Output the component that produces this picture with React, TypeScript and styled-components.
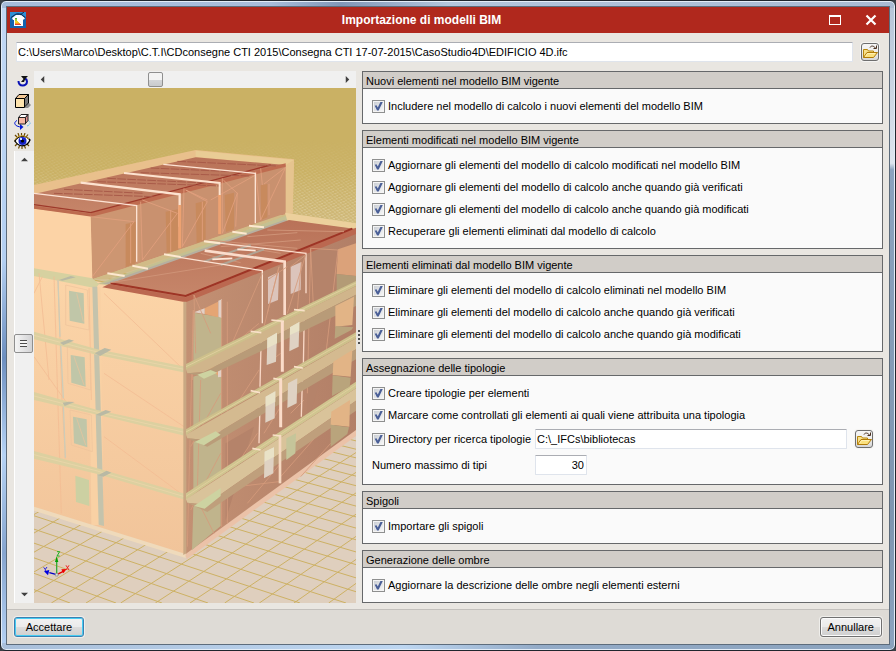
import React, { useState } from "react";
import styled, { createGlobalStyle } from "styled-components";

const GlobalStyle = createGlobalStyle`
  *, *::before, *::after { box-sizing: border-box; }
  body { margin: 0; background: #3b4046; }
  body, button, input { font-family: "Liberation Sans", Arial, sans-serif; font-size: 11px; color: #000; }
`;

const Frame = styled.div`
  display: flex;
  min-height: 100vh;
  padding: 6px;
  border: 1px solid #20262d;
  border-radius: 6px;
  background:
    linear-gradient(90deg, #a9bfda, #bdd6f1 45%, #93abc8 60%, #8aa2bd) bottom / 100% 7px no-repeat,
    linear-gradient(90deg, #a6bcda, #a9bddb 30%, #8197b7 38%, #b3c5dc 50%, #a9bbd3) top / 100% 7px no-repeat,
    linear-gradient(180deg, #c2d8f4, #b4d0f2 40%, #6d8fc0 55%, #b6d3f5 70%, #86a5cf 85%, #b6d3f5) left / 7px 100% no-repeat,
    linear-gradient(180deg, #b5c4d8, #dde5ee 25%, #8ba3bf 26%, #7f96b1 80%, #8ca4c0) right / 7px 100% no-repeat;
  box-shadow: inset 0 0 0 1px #e3ecf7;
`;

const Window = styled.div`
  flex: 1;
  min-width: 0;
  display: flex;
  flex-direction: column;
  background: #e9e6e1;
  outline: 1px solid #5d6c7c;
`;

const TitleBar = styled.header`
  display: flex;
  align-items: center;
  height: 26px;
  padding: 0 3px;
  background: #b0281d;
  color: #fff;
`;

const Title = styled.h1`
  flex: 1;
  margin: 0;
  text-align: center;
  font-size: 12px;
  line-height: 16px;
  font-weight: 700;
`;

const CaptionButton = styled.button`
  display: grid;
  place-items: center;
  width: 36px;
  height: 24px;
  padding: 0;
  border: 0;
  background: none;
`;

const CaptionButtons = styled.div`
  display: flex;
  margin-right: -3px;
`;

const PathRow = styled.div`
  display: flex;
  align-items: center;
  gap: 8px;
  padding: 9px 10px 9px 9px;
`;

const TextInput = styled.input<{ $width?: number; $right?: boolean }>`
  flex: ${p => (p.$width ? "none" : "1")};
  width: ${p => (p.$width ? `${p.$width}px` : "auto")};
  min-width: 0;
  height: 20px;
  padding: 0 2px 0 1px;
  border: 1px solid #dfe4ec;
  border-top-color: #abadb3;
  border-radius: 1px;
  background: #fff;
  text-align: ${p => (p.$right ? "right" : "left")};
`;

const FolderButton = styled.button`
  display: grid;
  place-items: center;
  flex: none;
  width: 18px;
  height: 18px;
  padding: 0;
  border: 1px solid #6e6e6e;
  border-radius: 3px;
  background: linear-gradient(#f6f6f6, #ededed 50%, #d6d6d6);
  box-shadow: 0 0 0 1px #f5f4f2;
`;

const Main = styled.main`
  flex: 1;
  display: grid;
  grid-template-columns: minmax(0, 342fr) 6px minmax(0, 521fr);
  padding: 0 6px 6px 7px;
`;

const Viewer = styled.section`
  display: grid;
  grid-template-columns: 20px minmax(0, 1fr);
`;

const Tools = styled.div`
  display: flex;
  flex-direction: column;
`;

const ToolButton = styled.button`
  display: grid;
  place-items: center;
  width: 17px;
  height: 20px;
  padding: 0;
  border: 0;
  background: none;
`;

const ViewColumn = styled.div`
  display: flex;
  flex-direction: column;
  min-width: 0;
`;

const ScrollBar = styled.div<{ $vertical?: boolean }>`
  display: flex;
  flex-direction: ${p => (p.$vertical ? "column" : "row")};
  align-items: stretch;
  flex: ${p => (p.$vertical ? "1" : "0 0 17px")};
  min-height: 0;
  background: #f0f0f0;
  box-shadow: ${p => (p.$vertical ? "inset 1px 0 #fff" : "none")};
`;

const ArrowButton = styled.button`
  display: grid;
  place-items: center;
  flex: none;
  min-width: 17px;
  height: 17px;
  padding: 0;
  border: 0;
  background: none;
`;

const Slider = styled.input<{ $vertical?: boolean }>`
  appearance: none;
  flex: 1;
  min-width: 0;
  min-height: 0;
  margin: 0;
  width: ${p => (p.$vertical ? "19px" : "auto")};
  height: ${p => (p.$vertical ? "auto" : "17px")};
  writing-mode: ${p => (p.$vertical ? "vertical-lr" : "horizontal-tb")};
  background: transparent;
  &::-webkit-slider-thumb {
    appearance: none;
    width: ${p => (p.$vertical ? 19 : 15)}px;
    height: ${p => (p.$vertical ? 19 : 15)}px;
    border: 1px solid #8f8f8f;
    border-radius: 2px;
    background: ${p =>
      p.$vertical
        ? "repeating-linear-gradient(#4c4c4c 0 1px, #f5f5f5 1px 3px) center / 7px 7px no-repeat, linear-gradient(90deg, #f5f5f5, #d2d2d4)"
        : "linear-gradient(#f3f3f3 50%, #d5d6d8 50%, #c9cbcd)"};
  }
`;

const Scene = styled.svg`
  display: block;
  flex: 1 1 0;
  width: 100%;
  min-height: 0;
  background: #dfcfbe;
`;

const Splitter = styled.div`
  display: flex;
  flex-direction: column;
  align-items: center;
  justify-content: center;
  gap: 2px;
`;

const Dot = styled.span`
  width: 2px;
  height: 2px;
  background: #4e4e4e;
`;

const Options = styled.form`
  display: flex;
  flex-direction: column;
  gap: 6px;
`;

const Group = styled.fieldset`
  margin: 0;
  padding: 0;
  min-width: 0;
  border: 1px solid #66686a;
  background: #fafafa;
`;

const GroupTitle = styled.h2`
  margin: 0;
  height: 17px;
  padding: 0 3px;
  border-bottom: 1px solid #66686a;
  background: #d1cdc8;
  font-size: 11px;
  line-height: 18px;
  font-weight: 400;
`;

const GroupBody = styled.div`
  display: flex;
  flex-direction: column;
  padding: 6px 9px;
`;

const Row = styled.div<{ $tall?: boolean }>`
  display: flex;
  align-items: center;
  height: ${p => (p.$tall ? 26 : 22)}px;
`;

const Label = styled.label<{ $column?: boolean }>`
  display: flex;
  align-items: center;
  gap: 3px;
  flex: none;
  width: ${p => (p.$column ? "163px" : "auto")};
  line-height: 17px;
  white-space: nowrap;
`;

const FieldArea = styled.div`
  flex: 1;
  display: flex;
  align-items: center;
  gap: 8px;
`;

const Check = styled.input`
  appearance: none;
  display: grid;
  place-items: center;
  flex: none;
  width: 13px;
  height: 13px;
  margin: 0;
  border: 1px solid #8e8f8f;
  background: linear-gradient(135deg, #cbcfd5, #f6f6f6) center / 9px 9px no-repeat, #f4f4f4;
  &:checked::after {
    content: "";
    width: 9px;
    height: 9px;
    background: #4a5f97;
    clip-path: polygon(8% 48%, 28% 42%, 42% 66%, 74% 0, 100% 0, 52% 100%, 34% 100%);
  }
`;

const Footer = styled.footer`
  display: flex;
  align-items: center;
  justify-content: space-between;
  height: 35px;
  padding: 0 7px;
  border-top: 1px solid #c3c0bc;
  background: #dedbd6;
`;

const PushButton = styled.button<{ $primary?: boolean }>`
  min-width: ${p => (p.$primary ? 70 : 62)}px;
  height: 20px;
  padding: 0 7px;
  border: 1px solid ${p => (p.$primary ? "#3c7fb1" : "#707070")};
  border-radius: 3px;
  background: linear-gradient(#f2f2f2, #ebebeb 50%, #dddddd 50%, #cfcfcf);
  box-shadow: ${p => (p.$primary ? "inset 0 0 0 1px #46cdf3, 0 0 0 1px #efeeeb" : "inset 0 0 0 1px #fbfbfb, 0 0 0 1px #efeeeb")};
  line-height: 16px;
`;

const FolderIcon = () => (
  <svg width="16" height="16" viewBox="0 0 16 16" aria-hidden="true">
    <path d="M1.5 13.5V5.500h4l1 1.500h5v2" fill="#f8e08a" stroke="#b8860b" />
    <path d="M1.5 13.5 5 8.500h10.500l-4 5z" fill="#fbe17e" stroke="#b07a08" />
    <path d="M3.500 12.500 5.500 9.500H13" stroke="#fff0b4" fill="none" />
    <path d="M8 3.500c1-2 3.500-2 5.500.5M14.500 1.500v3h-3" fill="none" stroke="#4a3020" />
  </svg>
);

const AppIcon = () => (
  <svg width="16" height="16" viewBox="0 0 16 16" aria-hidden="true">
    <rect width="16" height="16" fill="#1462ae" />
    <path d="M0 0h16v5L8 1 0 6z" fill="#2f8fd5" />
    <path d="M2 6 6 3h5l4 3-1 1.500h-1V14H4V8H3z" fill="#fff" />
    <path d="M1 5.500 6 2h5l4 3.500M10 3l4-3" stroke="#0b2f52" fill="none" />
    <path d="M5 6h2v1H5z" fill="#49a942" />
    <path d="M5 7h2v2H5z" fill="#a4ce39" />
    <path d="M5 9h3v1H5z" fill="#f5d426" />
    <path d="M5 10h4v1H5z" fill="#f5c426" />
    <path d="M5 11h5v1H5z" fill="#f59a23" />
    <path d="M5 12h6v1H5z" fill="#e5402f" />
  </svg>
);

const RotateIcon = () => (
  <svg width="14" height="14" viewBox="0 0 14 14" aria-hidden="true">
    <path d="M2.500 7C2.500 13 11 13 11 7.500 11 6 10 5 9 4.500" fill="none" stroke="#0a12b4" strokeWidth="2" />
    <path d="M5 2h7L9.500 4.500 8 8 5 8 7.500 5z" fill="#111" />
  </svg>
);

const CubeIcon = () => (
  <svg width="17" height="16" viewBox="0 0 17 16" aria-hidden="true">
    <path d="M10 15h4l3-3-2-2z" fill="#8d8d8d" />
    <path d="M1.500 5.500 5 1.500h9.500L10.500 5.500z" fill="#f3c896" stroke="#000" />
    <path d="M10.500 5.500l4-4v8.500l-4 4z" fill="#777" stroke="#000" />
    <path d="M1.500 5.500h9v9h-9z" fill="#fde3ad" stroke="#000" />
  </svg>
);

const OrbitIcon = () => (
  <svg width="17" height="17" viewBox="0 0 17 17" aria-hidden="true">
    <path d="M14 7.500c3 1.500 3 4-1 5.500" fill="none" stroke="#67b7e8" strokeDasharray="2 1" />
    <path d="M3 7.500C0 9 0 11.500 3 13c1.500.8 3 1 5 1" fill="none" stroke="#0018d8" />
    <path d="M6 11l3.500 3L6 17z" fill="#0018d8" />
    <path d="M4.500 4.500l2.500-3h7l-2.500 3z" fill="#fff" stroke="#222" />
    <path d="M11.500 4.500l2.500-3v6l-2.500 3z" fill="#d88e8e" stroke="#222" />
    <path d="M4.500 4.500h7v6.500h-7z" fill="#f6b8a4" stroke="#222" />
  </svg>
);

const EyeIcon = () => (
  <svg width="17" height="16" viewBox="0 0 17 16" aria-hidden="true">
    <path d="M3 4 1 2M5 3 4 0M7.500 2.500V0M10 3l1-3M12 4l2-2.500M3 11l-2 2M5.500 13l-1 2.500M8 13.500V16M10.500 13l1 2.500M13 11l2 2M2 8H0" stroke="#6b4a00" strokeWidth="1.200" />
    <path d="M1 8c3-6 11-6 15-1-3 7-11 8-15 1z" fill="#fff" stroke="#000" strokeWidth="1.300" />
    <circle cx="8.500" cy="8" r="4" fill="#1522c9" />
    <circle cx="8.500" cy="8" r="1.600" fill="#000" />
    <rect x="6" y="5" width="2" height="2" fill="#cfe0ff" />
    <path d="M1 6.500C4 2 11 1.500 15 6" stroke="#d7a520" fill="none" />
  </svg>
);

const arrows = {
  left: "M6 0v8L2 4z",
  right: "M2 0v8l4-4z",
  up: "M0 6h8L4 2z",
  down: "M0 2h8L4 6z",
};

const Arrow = ({ dir, label }: { dir: keyof typeof arrows; label: string }) => (
  <ArrowButton type="button" aria-label={label}>
    <svg width="7" height="7" viewBox="0 0 8 8" aria-hidden="true">
      <path d={arrows[dir]} fill="#404040" />
    </svg>
  </ArrowButton>
);

const range = (from: number, to: number, step: number) => {
  const out: number[] = [];
  for (let v = from; v <= to; v += step) out.push(v);
  return out;
};

/* Ground lines converge on two vanishing points; drawing units are thirds of a pixel. */
const gridA = range(-1300, 3200, 104).map(x => `M${x} 1569L6000 -2100`).join("");
const gridB = range(-9000, 6000, 138).map(x => `M${x} 1569L-5085 -360`).join("");

const Building = () => (
  <Scene viewBox="0 24 966 1545" preserveAspectRatio="xMidYMid slice" role="img" aria-label="Modello BIM">
    <defs>
      <linearGradient id="haze" x1="0" y1="0" x2="0" y2="1">
        <stop offset="0" stopColor="#cab164" />
        <stop offset=".28" stopColor="#cab164" />
        <stop offset=".5" stopColor="#cab164" stopOpacity=".7" />
        <stop offset=".85" stopColor="#cab164" stopOpacity="0" />
      </linearGradient>
      <linearGradient id="wall" x1="0" y1="0" x2="0" y2="1">
        <stop offset="0" stopColor="#fcd5a8" />
        <stop offset="1" stopColor="#f1c49a" />
      </linearGradient>
      <linearGradient id="side" x1="0" y1="0" x2="1" y2="0">
        <stop offset="0" stopColor="#c39073" />
        <stop offset="1" stopColor="#b27f67" />
      </linearGradient>
      <linearGradient id="top" x1="0" y1="0" x2="0" y2="1">
        <stop offset="0" stopColor="#b97258" />
        <stop offset="1" stopColor="#c6866a" />
      </linearGradient>
      <pattern id="dots" width="14" height="10" patternUnits="userSpaceOnUse" patternTransform="rotate(8)">
        <path d="M1 2h7M8 7h6" stroke="#e3d5a8" strokeWidth="2.500" />
      </pattern>
      <linearGradient id="fade" x1="0" y1="0" x2="0" y2="1">
        <stop offset="0" stopColor="#000" />
        <stop offset="1" stopColor="#fff" />
      </linearGradient>
      <mask id="dotMask">
        <rect y="180" width="966" height="220" fill="url(#fade)" />
        <rect y="400" width="966" height="60" fill="#fff" />
      </mask>
    </defs>

    <rect y="24" width="966" height="1545" fill="#dfcfbe" />
    <path d={gridA} stroke="#cdb164" strokeWidth="3" />
    <path d={gridB} stroke="#cdb164" strokeWidth="3" />
    <rect y="24" width="966" height="900" fill="url(#haze)" />
    <rect y="180" width="966" height="280" fill="url(#dots)" mask="url(#dotMask)" />

    {/* Upper block */}
    <path d="M0 315 485 210 780 238 776 400 740 405 0 580z" fill="#e9c08c" />
    <path d="M485 212 780 240 755 256 485 230z" fill="#e9cc95" />
    <path d="M755 256 780 240 776 400 753 403z" fill="#e6c48f" />
    <path d="M0 342 485 232 755 255 170 408 0 385z" fill="url(#top)" />
    <path d="M170 405 755 256V402L175 597z" fill="#c9916f" />
    <path d="M170 405 320 368V548L175 597z" fill="#cd9672" />
    <path d="M0 386 170 408 175 597 0 570z" fill="#fcd3a6" />
    <path d="M170 397 755 250 755 260 170 411z" fill="#bf6c50" />
    <path d="M0 374 170 398 710 255" fill="none" stroke="#9e392a" strokeWidth="4" />
    <path d="M0 382 170 405" stroke="#bd6b4f" strokeWidth="9" />
    <path d="M60 340 360 350M90 328 330 340M190 305 560 318M220 295 540 310M320 278 650 288M350 264 620 276M430 244 730 258" stroke="#a95b49" strokeWidth="3" strokeDasharray="26 4" />
    <path d="M275 432 305 425V550L275 562zM395 395 432 388V510L398 518zM485 370 515 362V478L488 490zM572 345 600 338V448L576 456zM680 316 700 312V412L682 420z" fill="#c88a5d" />
    <path d="M175 590 300 425 170 410M320 365 325 540 430 400 325 360M450 325 445 500 520 365 455 330 520 360M565 295 565 460 610 340 568 300M665 275 680 420 755 262 690 312M610 338 605 440M530 360 665 285M680 265 685 315M705 312V405M290 430 290 550M410 390V515M505 365V480" stroke="#e2a07e" strokeWidth="2.500" fill="none" />
    <path d="M0 340 308 377V545" fill="none" stroke="#fde3d4" strokeWidth="4" />
    <path d="M140 308 437 343V440" fill="none" stroke="#fde3d0" strokeWidth="7" />
    <path d="M437 375V505" stroke="#eda271" strokeWidth="9" />
    <path d="M270 279 557 309V345" fill="none" stroke="#fde3d0" strokeWidth="6" />
    <path d="M557 345V462" stroke="#eda271" strokeWidth="9" />
    <path d="M388 253 664 280V430" fill="none" stroke="#fde3d4" strokeWidth="4" />

    {/* Long facade in shade */}
    <path d="M455 655 966 447V1058L455 1430z" fill="url(#side)" />
    <path d="M830 500 912 510 908 640 830 670zM575 1090 660 1040 575 1320zM820 830 890 780 820 1040z" fill="#b5836a" />

    {/* Lit gable */}
    <path d="M0 570 190 605 455 660V1430L0 1282z" fill="url(#wall)" />
    <path d="M0 565 175 595 195 612 185 625 0 588z" fill="#d6d1a0" />
    <path d="M182 622 190 1335" stroke="#f9d1a4" strokeWidth="36" />
    <path d="M175 620H190L210 1338 194 1334z" fill="#c4c3ac" />
    <path d="M190 612 760 405 775 424 225 615z" fill="#c4c092" />
    <path d="M175 598 740 405 760 405 220 598z" fill="#d1bb87" />
    <path d="M205 612 225 612 770 425 750 420z" fill="#b6afa0" />
    <path d="M72 598 84 960 94 1135M15 580 45 900M60 590 82 1300M165 625 172 960M210 640 450 870M210 880 450 1040M210 1070 440 1240M0 830 110 985M0 640 25 590" fill="none" stroke="#f3bd94" strokeWidth="2.500" />
    <path d="M72 600 78 770M80 795 88 955M88 975 94 1133" stroke="#cdccb8" strokeWidth="4" />

    <path d="M0 755 190 808 455 860V878L190 825 0 778z" fill="#dcd0a0" />
    <path d="M0 936 190 990 455 1048V1068L190 1004 0 960z" fill="#dcd0a0" />
    <path d="M0 1113 190 1165 455 1242V1260L190 1182 0 1136z" fill="#dcd0a0" />
    <path d="M0 766 190 816 455 869M0 948 190 997 455 1058M0 1124 190 1173 455 1251" stroke="#e8d5a8" strokeWidth="3" fill="none" />
    <path d="M182 820 212 804 232 809 198 828zM186 1004 215 990 232 995 200 1008zM192 1186 218 1172 232 1178 208 1190zM78 788 105 778 120 782 88 795zM86 968 105 965 122 966 92 978zM75 600 110 588 125 592 85 602z" fill="#b9b9a4" />
    <path d="M0 1280 455 1422V1434L0 1292z" fill="#efdabb" />
    <path d="M455 1422 966 1050V1068L458 1438z" fill="#ebc2a8" />

    <path d="M105 632 149 640 151 731 107 722z" fill="#c0c6a8" />
    <path d="M110 825 152 832 155 920 112 908z" fill="#c0c6a8" />
    <path d="M117 1010 158 1018 160 1102 120 1090z" fill="#c0c6a8" />
    <path d="M124 1187 165 1200 166 1278 126 1266z" fill="#ccd0a2" />
    <path d="M128 640 148 725M120 830 150 915M128 1015 155 1095M95 615 160 630 165 750 95 735zM100 800 168 815 170 930 102 910zM108 990 172 1005 175 1115 112 1095z" fill="none" stroke="#edc39c" strokeWidth="2" />

    {/* Lower roof */}
    <path d="M753 398 966 430V448L760 422z" fill="#ecd09c" />
    <path d="M225 612 765 420 966 447 455 655z" fill="url(#top)" />
    <path d="M225 612 455 652 966 443V462L455 667 205 622z" fill="#bb6850" />
    <path d="M230 610 455 648 955 446" stroke="#9e3425" strokeWidth="6" fill="none" />
    <path d="M230 608 560 555M560 500 800 480M520 480 790 505M640 470 790 458M500 520 620 548M700 450 930 455M590 495 740 520" stroke="#cf9377" strokeWidth="3" />
    <path d="M510 545 650 495M560 555 690 508" stroke="#b0a494" strokeWidth="6" />
    <path d="M437 532 685 572V730" fill="none" stroke="#fce2d2" strokeWidth="4" />
    <path d="M512 512 752 545V705" fill="none" stroke="#fbdccb" strokeWidth="8" />
    <path d="M512 484 816 520V640" fill="none" stroke="#fbdccb" strokeWidth="4" />
    <path d="M220 580 272 588M295 557 342 566M390 523 440 531M510 484 558 490M595 455 638 461M645 437 690 442" stroke="#fde8cf" strokeWidth="6" />
    <path d="M535 538 595 535M610 508 665 512" stroke="#fde8da" strokeWidth="5" />

    {/* Facade glazing */}
    <path d="M448 665H457V1420L448 1425z" fill="#c9a883" />
    <path d="M478 698 563 712V800L478 850zM478 890 562 860V990L478 1050zM478 1085 562 1060V1180L478 1240zM478 1280 560 1225V1338L474 1410z" fill="#c0b48c" />
    <path d="M512 685 552 665V712L512 702zM520 865 555 857V888zM520 1060 555 1045V1060z" fill="#e5a574" />
    <path d="M553 662 564 658V714L553 710zM552 860 563 855V890L552 892zM552 1050 562 1042V1062L552 1064zM480 697 512 685V702z" fill="#e3d0c5" />
    <path d="M912 508 966 490V588L908 582z" fill="#dba27a" />
    <path d="M908 582 966 588V610L908 636z" fill="#b39b76" />
    <path d="M770 560 802 546 800 630 770 642zM702 592 735 576 732 660 702 672z" fill="#dcc4bb" />

    <path d="M460 1400 478 690 475 900M480 645 485 820M563 660V1340M580 665V1330M590 800 685 580M590 1000 675 870M585 1190 670 1060M480 645 530 760M500 900 490 1230M700 700 735 560 690 740M760 700 815 525 770 560M830 505 820 940M870 870 912 510 830 505M840 720 830 505M790 690 802 546M640 1270 740 1150M610 1220 735 1205M740 1190 890 1020M800 1190 890 1090M590 800 675 730M470 1100 560 940M470 1290 560 1120M700 600 760 560M700 850 740 820M770 1000 810 960M690 1060 740 980M540 1360 490 1260" stroke="#d59b7c" strokeWidth="2.500" fill="none" />
    <path d="M682 755 678 920M679 940 675 1090M811 692 808 860M806 865 802 1010" stroke="#f9d8c6" strokeWidth="4" />

    {/* Balcony slabs */}
    <path d="M456 852 966 603V618L500 850 456 870z" fill="#cdc08b" />
    <path d="M456 868 966 618V644L510 876 460 880z" fill="#d0b58b" />
    <path d="M460 880 510 876 966 644V678L515 892z" fill="#b89b78" />
    <path d="M456 1048 966 757V775L500 1036 456 1066z" fill="#cdc08b" />
    <path d="M456 1064 966 775V808L515 1080 460 1075z" fill="#d4ba90" />
    <path d="M460 1075 515 1080 966 808V838L520 1100z" fill="#ba9c79" />
    <path d="M456 1240 966 905V925L500 1228 456 1260z" fill="#d0c590" />
    <path d="M456 1258 966 925V962L515 1274 460 1268z" fill="#d9c39a" />
    <path d="M460 1268 515 1274 966 962V992L520 1296z" fill="#bf9f7c" />
    <path d="M456 860 966 609M456 1056 966 765M456 1249 966 914" stroke="#dfcf9d" strokeWidth="3" />
    <path d="M490 884 530 870 550 878 510 896zM482 1086 545 1054 560 1064 510 1096zM480 1278 560 1224V1248L512 1286z" fill="#cdd3a1" />

    <path d="M904 678 960 650 955 735 904 740zM898 845 955 810 950 890 896 885zM892 995 948 960 946 1040 890 1034z" fill="#e2b486" />
    <path d="M904 738 958 742 952 750 902 776zM896 886 950 893 947 920 894 948zM890 1034 945 1042 940 1062 890 1100z" fill="#b9a47c" />
    <path d="M700 775 729 758 726 845 698 855zM768 742 796 726 794 800 766 814zM695 950 724 934 722 1015 694 1028zM762 910 790 895 788 970 760 984zM692 1115 720 1102 718 1180 690 1195z" fill="#dfd2c3" />
    <path d="M700 775 729 758V790L700 805zM768 742 796 726V752L768 765zM695 950 724 934V965L695 980zM692 1115 720 1102V1130L692 1145z" fill="#e9e2c7" />
    <path d="M757 1075 786 1060 784 1120 757 1140z" fill="#c5c59a" />
    <path d="M745 724V875M740 895V1042" stroke="#fbdcc9" strokeWidth="9" />
    <path d="M738 1065V1210" stroke="#f5d8c0" strokeWidth="8" />
    <path d="M650 754 682 758M712 720 750 724M780 689 812 692M650 932 678 938M718 895 744 900M780 860 806 864M655 1105 680 1110M716 1065 740 1068" stroke="#f9e0c8" strokeWidth="5" />

    {/* Axis tripod */}
    <g fill="none" strokeWidth="4">
      <path d="M68 1484V1445" stroke="#38a838" />
      <path d="M68 1484 46 1478" stroke="#0000c8" />
      <path d="M68 1484 88 1474" stroke="#e00000" />
    </g>
    <path d="M68 1428 63 1446H73z" fill="#00a000" />
    <path d="M30 1474 46 1470 42 1486z" fill="#0000e0" />
    <path d="M98 1467 82 1468 88 1480z" fill="#f00000" />
    <path d="M64 1480h8v8h-8z" fill="#ddd" stroke="#888" strokeWidth="2" />
    <path d="M69 1415h8l-8 13h8" stroke="#20b020" strokeWidth="3" fill="none" />
    <path d="M96 1456 105 1470M105 1456 96 1470" stroke="#f02020" strokeWidth="3" />
    <path d="M29 1462 34 1468 39 1461M34 1468V1473" stroke="#2020e0" strokeWidth="3" fill="none" />
  </Scene>
);

const Option = ({ text, column }: { text: string; column?: boolean }) => (
  <Label $column={column}>
    <Check type="checkbox" defaultChecked />
    {text}
  </Label>
);

const OptionGroup = ({ title, options, children }: { title: string; options: string[]; children?: React.ReactNode }) => (
  <Group aria-label={title}>
    <GroupTitle>{title}</GroupTitle>
    <GroupBody>
      {options.map(text => (
        <Row key={text}>
          <Option text={text} />
        </Row>
      ))}
      {children}
    </GroupBody>
  </Group>
);

export default function App() {
  const [path, setPath] = useState("C:\\Users\\Marco\\Desktop\\C.T.I\\CDconsegne CTI 2015\\Consegna CTI 17-07-2015\\CasoStudio4D\\EDIFICIO 4D.ifc");
  return (
    <>
      <GlobalStyle />
      <Frame>
        <Window>
          <TitleBar>
            <AppIcon />
            <Title>Importazione di modelli BIM</Title>
            <CaptionButtons>
              <CaptionButton aria-label="Ingrandisci">
                <svg width="14" height="12" viewBox="0 0 14 12" aria-hidden="true">
                  <path d="M1 1h12v10H1zM2 3v7h10V3z" fill="#fff" fillRule="evenodd" />
                </svg>
              </CaptionButton>
              <CaptionButton aria-label="Chiudi">
                <svg width="12" height="12" viewBox="0 0 12 12" aria-hidden="true">
                  <path d="M1.500 1.500l9 9M10.500 1.500l-9 9" stroke="#fff" strokeWidth="2.200" />
                </svg>
              </CaptionButton>
            </CaptionButtons>
          </TitleBar>
          <PathRow>
            <TextInput aria-label="File IFC" value={path} onChange={e => setPath(e.target.value)} />
            <FolderButton aria-label="Sfoglia file">
              <FolderIcon />
            </FolderButton>
          </PathRow>
          <Main>
            <Viewer>
              <Tools>
                <ToolButton aria-label="Ruota"><RotateIcon /></ToolButton>
                <ToolButton aria-label="Vista 3D"><CubeIcon /></ToolButton>
                <ToolButton aria-label="Orbita"><OrbitIcon /></ToolButton>
                <ToolButton aria-label="Visibilità"><EyeIcon /></ToolButton>
                <ScrollBar $vertical>
                  <Arrow dir="up" label="Su" />
                  <Slider $vertical type="range" max={200} defaultValue={83} aria-label="Rotazione verticale" />
                  <Arrow dir="down" label="Giù" />
                </ScrollBar>
              </Tools>
              <ViewColumn>
                <ScrollBar>
                  <Arrow dir="left" label="Sinistra" />
                  <Slider type="range" max={200} defaultValue={71} aria-label="Rotazione orizzontale" />
                  <Arrow dir="right" label="Destra" />
                </ScrollBar>
                <Building />
              </ViewColumn>
            </Viewer>
            <Splitter>
              <Dot />
              <Dot />
              <Dot />
              <Dot />
            </Splitter>
            <Options onSubmit={e => e.preventDefault()}>
              <OptionGroup
                title="Nuovi elementi nel modello BIM vigente"
                options={["Includere nel modello di calcolo i nuovi elementi del modello BIM"]}
              />
              <OptionGroup
                title="Elementi modificati nel modello BIM vigente"
                options={[
                  "Aggiornare gli elementi del modello di calcolo modificati nel modello BIM",
                  "Aggiornare gli elementi del modello di calcolo anche quando già verificati",
                  "Aggiornare gli elementi del modello di calcolo anche quando già modificati",
                  "Recuperare gli elementi eliminati dal modello di calcolo",
                ]}
              />
              <OptionGroup
                title="Elementi eliminati dal modello BIM vigente"
                options={[
                  "Eliminare gli elementi del modello di calcolo eliminati nel modello BIM",
                  "Eliminare gli elementi del modello di calcolo anche quando già verificati",
                  "Eliminare gli elementi del modello di calcolo anche quando già modificati",
                ]}
              />
              <OptionGroup
                title="Assegnazione delle tipologie"
                options={[
                  "Creare tipologie per elementi",
                  "Marcare come controllati gli elementi ai quali viene attribuita una tipologia",
                ]}
              >
                <Row $tall>
                  <Option column text="Directory per ricerca tipologie" />
                  <FieldArea>
                    <TextInput aria-label="Directory per ricerca tipologie" defaultValue={"C:\\_IFCs\\bibliotecas"} />
                    <FolderButton type="button" aria-label="Sfoglia directory">
                      <FolderIcon />
                    </FolderButton>
                  </FieldArea>
                </Row>
                <Row $tall>
                  <Label $column htmlFor="max-types">Numero massimo di tipi</Label>
                  <TextInput id="max-types" $width={52} $right defaultValue="30" />
                </Row>
              </OptionGroup>
              <OptionGroup title="Spigoli" options={["Importare gli spigoli"]} />
              <OptionGroup
                title="Generazione delle ombre"
                options={["Aggiornare la descrizione delle ombre negli elementi esterni"]}
              />
            </Options>
          </Main>
          <Footer>
            <PushButton $primary>Accettare</PushButton>
            <PushButton>Annullare</PushButton>
          </Footer>
        </Window>
      </Frame>
    </>
  );
}
